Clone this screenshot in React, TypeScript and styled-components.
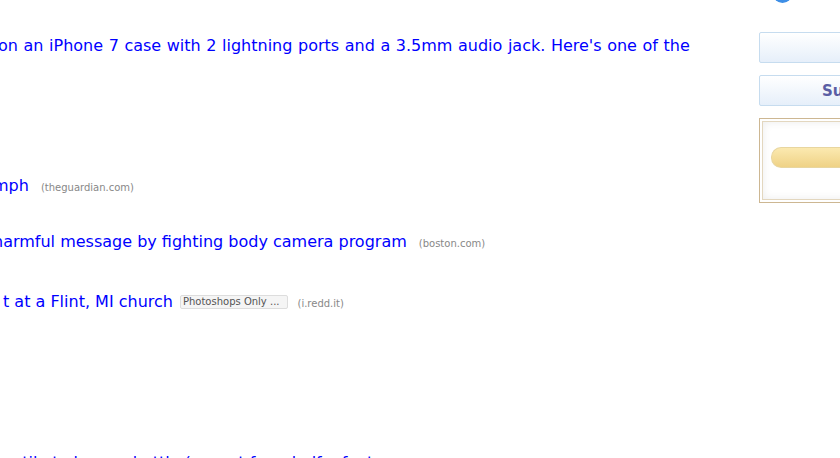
import styled, { createGlobalStyle } from 'styled-components';

const GlobalStyle = createGlobalStyle`
  html, body {
    margin: 0;
    padding: 0;
    background: #fff;
    overflow: hidden;
  }
  body {
    width: 840px;
    height: 458px;
    font-family: Verdana, "DejaVu Sans", sans-serif;
  }
`;

const Page = styled.div`
  display: flex;
  width: 840px;
  height: 458px;
  overflow: hidden;
`;

const Main = styled.div`
  flex: none;
  width: 759px;
  display: flex;
  flex-direction: column;
  overflow: hidden;
`;

const Post = styled.div<{ $top: number; $shift?: number }>`
  margin-top: ${(p) => p.$top}px;
  margin-left: ${(p) => p.$shift ?? 0}px;
  display: flex;
  align-items: baseline;
  white-space: nowrap;
  height: 19px;
`;

const Title = styled.a<{ $wide?: boolean }>`
  color: #0000ff;
  font-size: 16px;
  line-height: 19px;
  text-decoration: none;
  margin-right: 12px;
  word-spacing: ${(p) => (p.$wide ? '0.5px' : '0')};
`;

const Flair = styled.span`
  display: inline-block;
  background: #f5f5f5;
  border: 1px solid #dddddd;
  color: #545454;
  font-size: 10px;
  line-height: 12px;
  padding: 0 7px 0 2px;
  margin: 0 10px 0 -5px;
  border-radius: 2px;
  align-self: center;
`;

const Domain = styled.span`
  color: #888888;
  font-size: 10px;
`;

const Side = styled.div`
  flex: none;
  width: 300px;
  display: flex;
  flex-direction: column;
`;

const Dot = styled.div`
  margin: -16px 0 0 14px;
  width: 19px;
  height: 19px;
  border-radius: 50%;
  background: #3d8ee6;
`;

const SideButton = styled.div<{ $top: number }>`
  margin-top: ${(p) => p.$top}px;
  height: 29px;
  border: 1px solid #c6dcef;
  border-radius: 2px;
  background: linear-gradient(#ffffff, #e6effa);
  display: flex;
  align-items: center;
  padding-left: 62px;
  color: #5a5ea4;
  font-weight: bold;
  font-size: 15px;
`;

const Panel = styled.div`
  margin-top: 12px;
  height: 79px;
  border: 1px solid #cdb792;
  padding: 2px;
  background: #fff;
`;

const PanelInner = styled.div`
  height: 100%;
  box-sizing: border-box;
  border: 1px solid #e3d7bf;
  box-shadow: inset 0 0 8px #ececec;
  display: flex;
  align-items: center;
  padding: 0 0 6px 8px;
`;

const Pill = styled.div`
  width: 100%;
  height: 19px;
  border-radius: 10px 0 0 10px;
  border: 1px solid #e8d6a0;
  border-right: none;
  background: linear-gradient(#fbe9b0, #efd286);
`;

export default function App() {
  return (
    <>
      <GlobalStyle />
      <Page>
        <Main>
          <Post $top={36} $shift={-2}>
            <Title $wide>on an iPhone 7 case with 2 lightning ports and a 3.5mm audio jack. Here's one of the</Title>
          </Post>
          <Post $top={121} $shift={-7}>
            <Title>mph</Title>
            <Domain>(theguardian.com)</Domain>
          </Post>
          <Post $top={37} $shift={-7}>
            <Title>harmful message by fighting body camera program</Title>
            <Domain>(boston.com)</Domain>
          </Post>
          <Post $top={41} $shift={3}>
            <Title>t at a Flint, MI church</Title>
            <Flair>Photoshops Only ...</Flair>
            <Domain>(i.redd.it)</Domain>
          </Post>
          <Post $top={142} $shift={-4}>
            <Title>reptile to have a bottle (except for a half a foot</Title>
          </Post>
        </Main>
        <Side>
          <Dot />
          <SideButton $top={29}></SideButton>
          <SideButton $top={12}>Submit a new text post</SideButton>
          <Panel>
            <PanelInner>
              <Pill />
            </PanelInner>
          </Panel>
        </Side>
      </Page>
    </>
  );
}
